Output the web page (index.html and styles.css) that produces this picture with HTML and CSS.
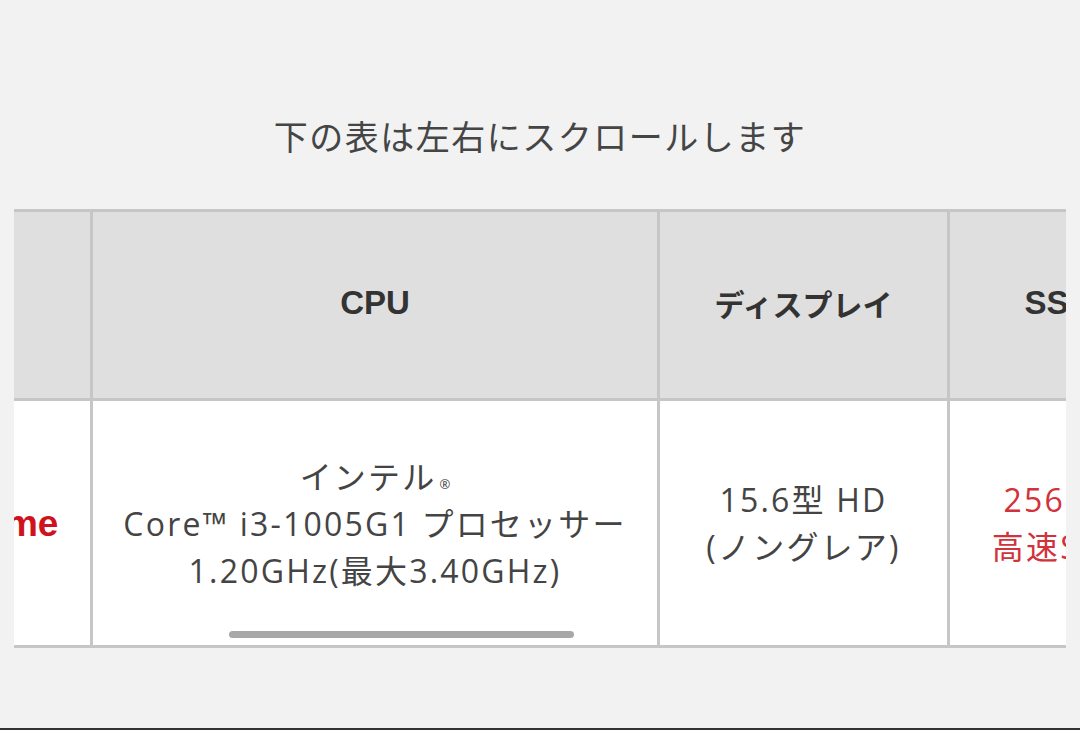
FILE: index.html
```html
<!DOCTYPE html>
<html lang="ja">
<head>
<meta charset="utf-8">
<title>スペック表</title>
<link rel="stylesheet" href="styles.css">
</head>
<body>
  <p class="note">下の表は左右にスクロールします</p>
  <div class="scroller">
    <table class="spec">
      <colgroup>
        <col class="c1"><col class="c2"><col class="c3"><col class="c4">
      </colgroup>
      <thead>
        <tr>
          <th></th>
          <th>CPU</th>
          <th><span class="ja">ディスプレイ</span></th>
          <th>SSD</th>
        </tr>
      </thead>
      <tbody>
        <tr>
          <td class="os">Home</td>
          <td>インテル<span class="reg">®</span><br>Core™ i3-1005G1 プロセッサー<br>1.20GHz(最大3.40GHz)</td>
          <td>15.6型 HD<br>(ノングレア)</td>
          <td class="red">256GB<br>高速SSD</td>
        </tr>
      </tbody>
    </table>
    <div class="thumb"></div>
  </div>
</body>
</html>
```

FILE: styles.css
```css
html, body {
  margin: 0;
  padding: 0;
}
body {
  background: #f2f2f2;
  height: 730px;
  box-sizing: border-box;
  border-bottom: 2px solid #333;
  overflow: hidden;
  font-family: "Noto Sans CJK JP", sans-serif;
  color: #444;
}
.note {
  margin: 111px 0 48px;
  text-align: center;
  font-size: 34px;
  line-height: 50px;
  letter-spacing: 1.5px;
  color: #454545;
}
.scroller {
  position: relative;
  margin: 0 14px;
  overflow: hidden;
}
.spec {
  margin-left: -90px;
  border-collapse: separate;
  border-spacing: 0;
  table-layout: fixed;
  width: 1246px;
  border-top: 3px solid #c6c6c6;
}
.c1 { width: 169px; }
.c2 { width: 567px; }
.c3 { width: 290px; }
.c4 { width: 220px; }
.spec th,
.spec td {
  border-right: 3px solid #c6c6c6;
  border-bottom: 3px solid #c6c6c6;
  text-align: center;
  vertical-align: middle;
  padding: 0;
}
.spec th {
  height: 182px;
  padding-bottom: 4px;
  background: #dfdfdf;
  font-family: "Liberation Sans", "Noto Sans CJK JP", sans-serif;
  font-weight: bold;
  font-size: 33px;
  color: #333;
}
.spec th .ja {
  font-family: "Noto Sans CJK JP", sans-serif;
  font-size: 30px;
}
.spec td {
  height: 244px;
  background: #fff;
  font-family: "Open Sans", "Noto Sans CJK JP", sans-serif;
  font-size: 32px;
  line-height: 47px;
  letter-spacing: 2.2px;
  color: #444;
}
.spec td.os {
  font-family: "Liberation Sans", sans-serif;
  font-weight: bold;
  font-size: 37px;
  letter-spacing: 0;
  color: #d0121c;
}
.spec td.red {
  color: #d2323a;
}
.reg {
  font-size: 13px;
  line-height: 0;
  margin-left: 3px;
  letter-spacing: 0;
}
.thumb {
  position: absolute;
  left: 215px;
  top: 422px;
  width: 345px;
  height: 7px;
  border-radius: 4px;
  background: #a8a8a8;
}
```
